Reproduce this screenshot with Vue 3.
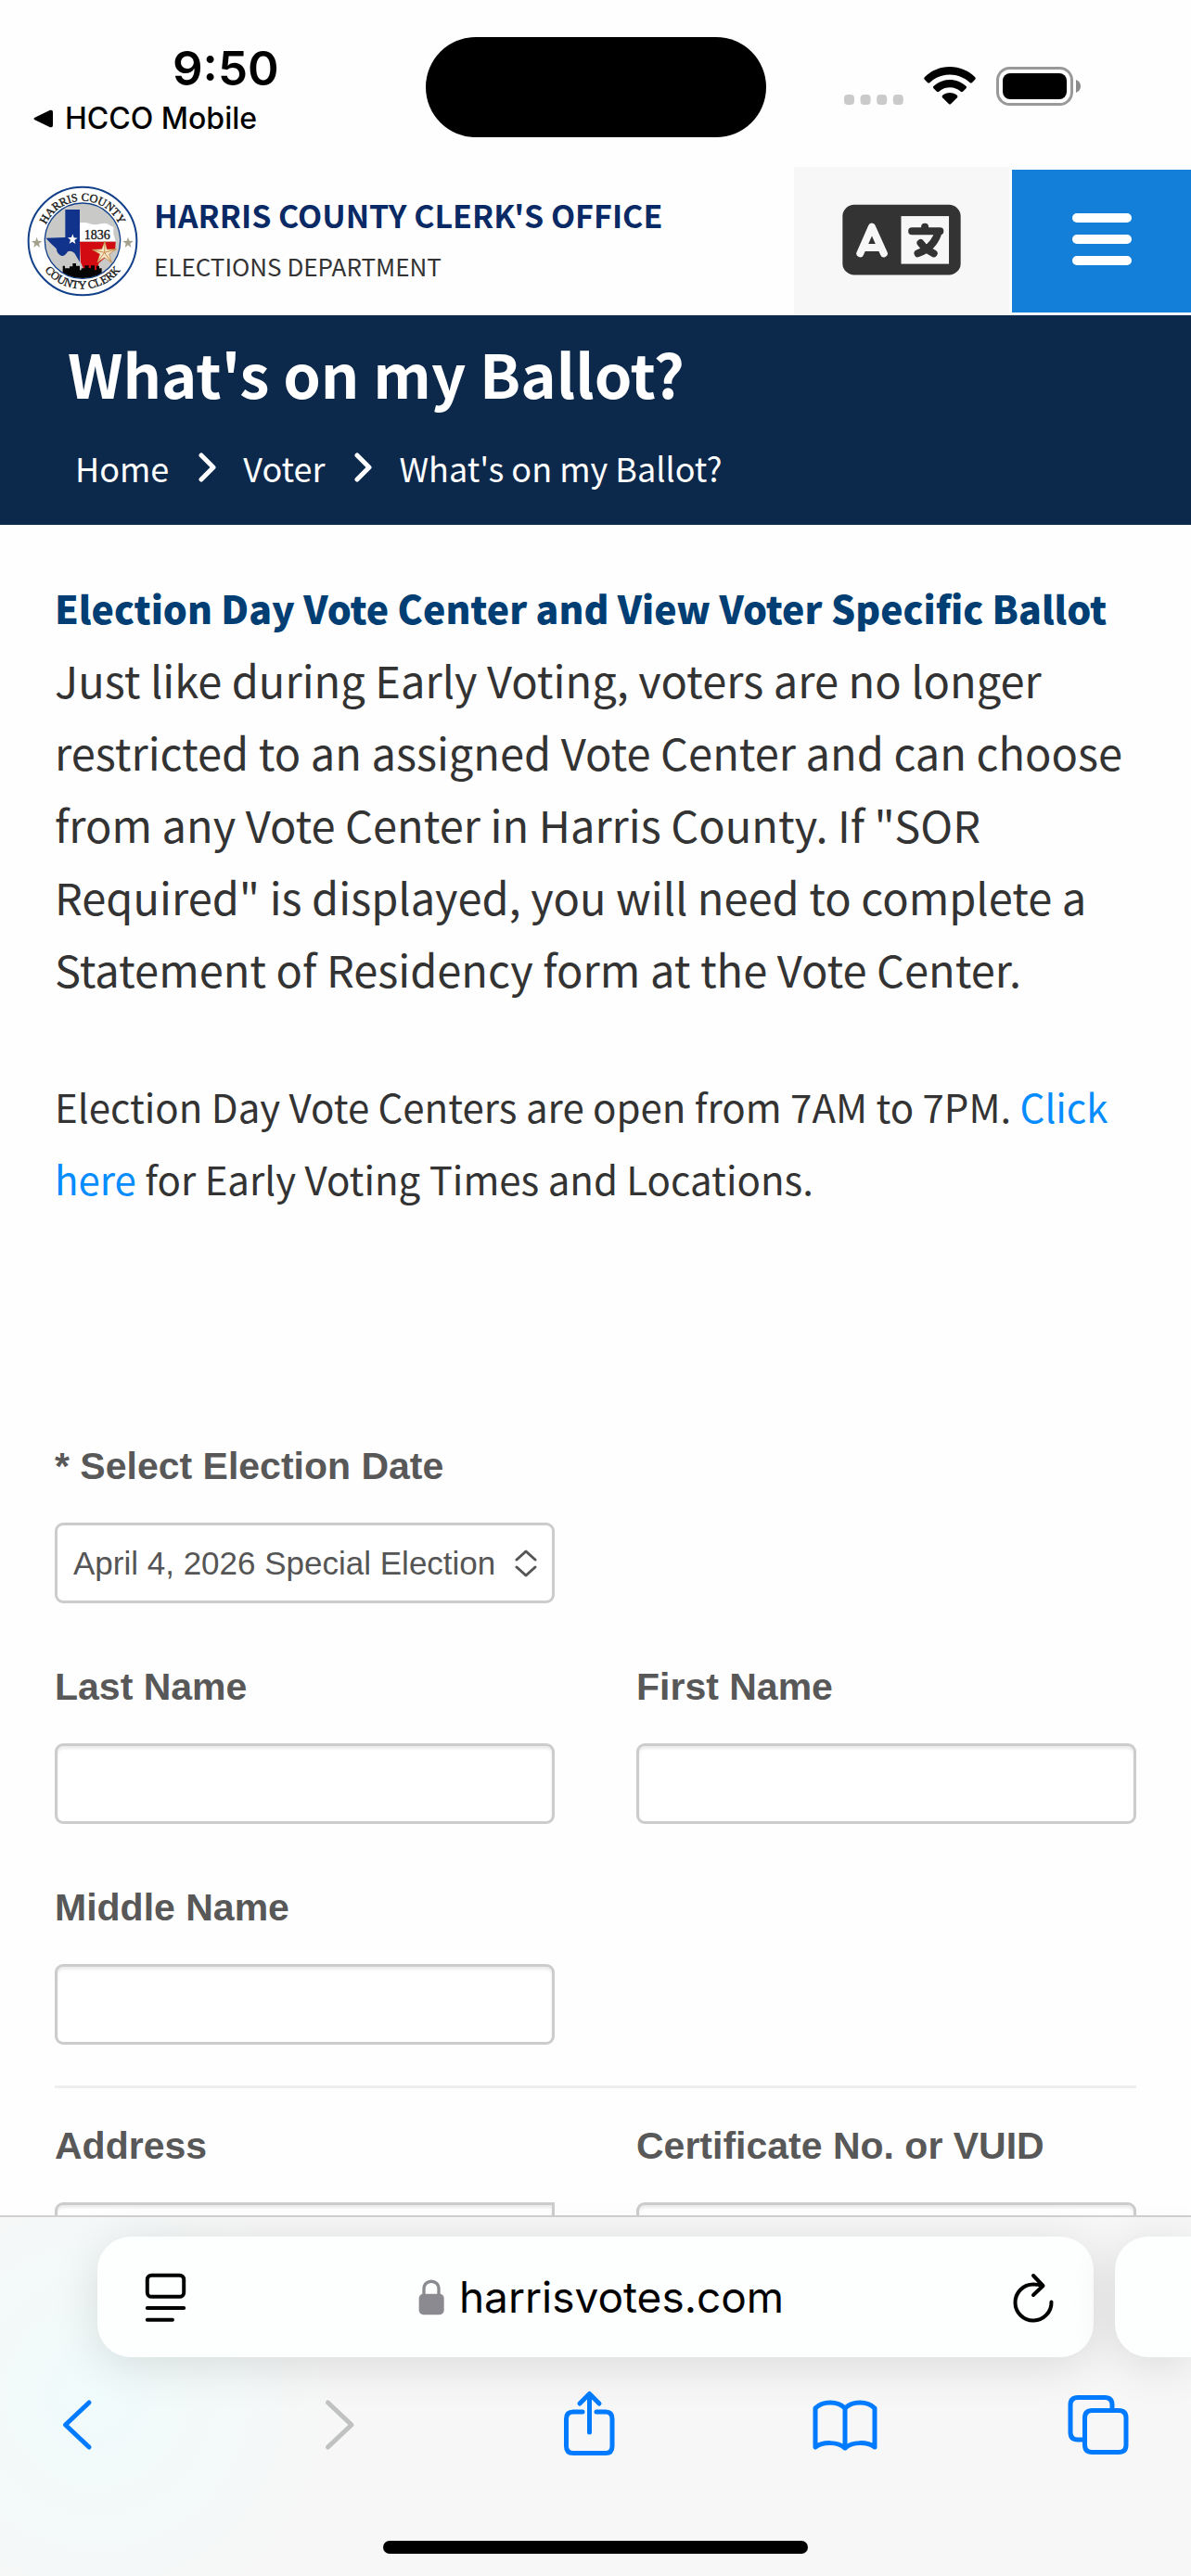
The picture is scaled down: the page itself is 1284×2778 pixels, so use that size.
<template>
  <div class="screen">
    <div class="status-bar">
      <div class="status-left">
        <span class="time">9:50</span>
        <a href="#" class="back-to-app">
          <svg width="22" height="20" viewBox="0 0 22 20" aria-hidden="true">
            <path d="M2 8.5 18 .8Q21 0 21 3V17Q21 20 18 19.2L2 11.5Q-1 10 2 8.5Z" />
          </svg>
          HCCO Mobile
        </a>
      </div>
      <div class="island"></div>
      <div class="status-right">
        <svg width="64" height="12" viewBox="0 0 64 12" fill="#cacaca" aria-hidden="true">
          <rect v-for="n in 4" :key="n" :x="(n - 1) * 17.6" width="11" height="11" rx="4" />
        </svg>
        <svg class="wifi" width="56" height="42" viewBox="0 0 56 42" aria-hidden="true">
          <path d="M28 0C38.500 0 48 4 55 11Q56.500 12.500 55 14L52 17Q50.800 18 49.500 17C43.500 11.500 36 8.500 28 8.500S12.500 11.500 6.500 17Q5.200 18 4 17L1 14Q-.5 12.500 1 11C8 4 17.500 0 28 0Z" />
          <path d="M28 14C34.500 14 40.500 16.500 45.300 20.800Q46.700 22 45.300 23.500L42 26.800Q41 27.700 39.800 26.800C36.500 24 32.500 22.300 28 22.300S19.500 24 16.200 26.800Q15 27.700 14 26.800L10.700 23.500Q9.300 22 10.700 20.800C15.500 16.500 21.500 14 28 14Z" />
          <path d="M28 28C31 28 33.500 29 35.800 30.800Q37 32 35.900 33.200L29.200 40Q28 41.200 26.800 40L20.100 33.200Q19 32 20.200 30.800C22.500 29 25 28 28 28Z" />
        </svg>
        <svg width="92" height="42" viewBox="0 0 92 42" aria-hidden="true">
          <rect x="1.500" y="1.500" width="80" height="39" rx="13" fill="none" stroke="#999" stroke-width="3" />
          <rect x="7" y="7" width="69" height="28" rx="8" />
          <path d="M86 14Q91 16 91 21T86 28Z" fill="#8c8c8c" />
        </svg>
      </div>
    </div>

    <header class="site-header">
      <a href="#" class="brand">
        <svg class="seal" width="120" height="120" viewBox="86 58 360 360" aria-hidden="true">
          <defs>
            <path id="seal-top" d="M136 238A130 130 0 0 1 396 238" />
            <path id="seal-bottom" d="M111 238A155 155 0 0 0 421 238" />
            <clipPath id="seal-clip"><circle cx="266" cy="237" r="121" /></clipPath>
          </defs>
          <circle cx="266" cy="238" r="175" fill="#fff" stroke="#12408a" stroke-width="6" />
          <circle cx="266" cy="237" r="122" fill="#c9cac8" stroke="#12408a" stroke-width="4" />
          <g clip-path="url(#seal-clip)">
            <path d="M257 179Q275 176 290 182T325 182T356 188L366 193V215L373 239H257Z" fill="#fff" />
            <path d="M210 136H257V306L240 277Q228 267 218 272Q210 287 198 286Q184 281 181 262L164 246L147 228L210 226Z" fill="#12338c" />
            <path d="M257 240H373L372 261L345 287L318 310L312 345H276L260 306Z" fill="#d20a11" />
            <path d="M150 342H202V318H209V326H224V320H234V310H245V318H257V332H262V326H273V317H286V325H293V317H305V332H311V318H320V326H328V342H376V370H150Z" fill="#050505" />
          </g>
          <path d="M234 215L238 227L250 228L240 235L243 247L233 240L223 246L227 234L218 227L230 226Z" fill="#fff" />
          <path d="M338 239L345 265L375 264L352 280L360 308L337 291L314 307L322 280L298 266L328 264Z" fill="#f7e6ca" stroke="#b77b35" stroke-width="2" />
          <path d="M338 239L337 275L375 264M337 275L360 308M337 275L314 307M337 275L298 266" stroke="#c68b48" stroke-width="3" fill="none" />
          <path
            v-for="x in [118, 413]"
            :key="x"
            :transform="`translate(${x} 242)`"
            d="M0-17L4-5L17-4L7 4L10 17L0 9L-10 17L-7 4L-17-4L-4-5Z"
            fill="#a5a08c"
          />
          <text x="271" y="233" class="seal-year">1836</text>
          <text class="seal-text">
            <textPath href="#seal-top" startOffset="50%" text-anchor="middle">HARRIS COUNTY</textPath>
          </text>
          <text class="seal-text">
            <textPath href="#seal-bottom" startOffset="50%" text-anchor="middle">COUNTY CLERK</textPath>
          </text>
        </svg>
        <span class="brand-text">
          <span class="brand-name">HARRIS COUNTY CLERK'S OFFICE</span>
          <span class="brand-dept">ELECTIONS DEPARTMENT</span>
        </span>
      </a>
      <button type="button" class="lang-btn" aria-label="Language">
        <svg width="128" height="77" viewBox="172 658 385 231" fill="none" stroke-linecap="round" stroke-linejoin="round" aria-hidden="true">
          <rect x="173" y="660" width="383" height="228" rx="38" fill="#333" />
          <rect x="363" y="697" width="155" height="155" fill="#f7f7f7" />
          <path d="M230 818L268 732L307 818M244 799H293" stroke="#f7f7f7" stroke-width="24" />
          <path d="M398 746H489M440 732V746M484 748C474 782 452 806 417 818M426 784Q440 804 469 818" stroke="#333" stroke-width="24" />
        </svg>
      </button>
      <button type="button" class="menu-btn" aria-label="Menu">
        <span></span>
        <span></span>
        <span></span>
      </button>
    </header>

    <main class="page">
      <section class="banner">
        <h1>What's on my Ballot?</h1>
        <nav class="crumbs">
          <template v-for="(crumb, i) in crumbs" :key="crumb">
            <svg v-if="i" width="24" height="32" viewBox="-4 0 24 32" aria-hidden="true">
              <path d="M3 3L16 16L3 29" fill="none" stroke="#fff" stroke-width="5" stroke-linecap="round" stroke-linejoin="round" />
            </svg>
            <a href="#">{{ crumb }}</a>
          </template>
        </nav>
      </section>

      <section class="content">
        <h2>Election Day Vote Center and View Voter Specific Ballot</h2>
        <p class="lead">
          Just like during Early Voting, voters are no longer restricted to an assigned Vote Center and can choose from any Vote Center in Harris County. If "SOR Required" is displayed, you will need to complete a Statement of Residency form at the Vote Center.
        </p>
        <p class="hours">
          Election Day Vote Centers are open from 7AM to 7PM. <a href="#">Click here</a> for Early Voting Times and Locations.
        </p>

        <form @submit.prevent>
          <div class="grid">
            <div class="field wide">
              <label for="election">* Select Election Date</label>
              <div class="select-wrap">
                <select id="election" v-model="form.election">
                  <option>April 4, 2026 Special Election</option>
                </select>
                <svg width="24" height="30" viewBox="0 0 24 30" aria-hidden="true">
                  <path d="M2 11L12 2L22 11M2 19L12 28L22 19" fill="none" stroke="#555" stroke-width="3" stroke-linecap="round" stroke-linejoin="round" />
                </svg>
              </div>
            </div>
            <div v-for="field in nameFields" :key="field.id" class="field">
              <label :for="field.id">{{ field.label }}</label>
              <input :id="field.id" v-model="form[field.id]" type="text">
            </div>
          </div>
          <hr>
          <div class="grid">
            <div class="field">
              <label for="address">Address</label>
              <input id="address" v-model="form.address" class="joined" type="text">
            </div>
            <div class="field">
              <label for="vuid">Certificate No. or VUID</label>
              <input id="vuid" v-model="form.vuid" type="text">
            </div>
          </div>
        </form>
      </section>
    </main>

    <footer class="toolbar">
      <div class="tabs">
        <div class="url-bar">
          <button type="button" class="reader" aria-label="Page menu">
            <svg width="45" height="53" viewBox="228 183 135 160" fill="none" stroke="#000" stroke-width="12" stroke-linecap="round" aria-hidden="true">
              <rect x="236" y="191" width="119" height="70" rx="14" />
              <path d="M236 298H355M236 336H318" />
            </svg>
          </button>
          <button type="button" class="address">
            <svg width="28" height="39" viewBox="1093 202 84 116" aria-hidden="true">
              <rect x="1095" y="249" width="81" height="67" rx="14" fill="#8b8a90" />
              <path d="M1111 252V233C1111 200 1159 200 1159 233V252" fill="none" stroke="#8b8a90" stroke-width="10" />
            </svg>
            harrisvotes.com
          </button>
          <button type="button" class="reload" aria-label="Reload">
            <svg width="52" height="60" viewBox="0 0 52 60" fill="none" stroke="#000" stroke-width="4" stroke-linecap="round" stroke-linejoin="round" aria-hidden="true">
              <path d="M45.500 35.500A19.500 19.500 0 1 1 26 16.500Q31 16.500 36 18M26 7L36.500 18L26 28" />
            </svg>
          </button>
        </div>
        <div class="next-tab"></div>
      </div>
      <nav class="actions">
        <button
          v-for="action in actions"
          :key="action.label"
          type="button"
          :aria-label="action.label"
          :disabled="action.disabled"
        >
          <svg width="80" height="80" viewBox="0 0 80 80" aria-hidden="true">
            <path :d="action.path" />
          </svg>
        </button>
      </nav>
      <div class="home-indicator"></div>
    </footer>
  </div>
</template>

<script setup>
import { reactive } from 'vue'

const crumbs = ['Home', 'Voter', "What's on my Ballot?"]

const nameFields = [
  { id: 'lastName', label: 'Last Name' },
  { id: 'firstName', label: 'First Name' },
  { id: 'middleName', label: 'Middle Name' }
]

const form = reactive({
  election: 'April 4, 2026 Special Election',
  lastName: '',
  firstName: '',
  middleName: '',
  address: '',
  vuid: ''
})

const actions = [
  { label: 'Back', path: 'M48 17L22.500 41L48 65' },
  { label: 'Forward', disabled: true, path: 'M31.500 17L57 41L31.500 65' },
  { label: 'Share', path: 'M32 27H22Q14.500 27 14.500 34.500V64Q14.500 71.500 22 71.500H57Q64 71.500 64 64V34.500Q64 27 57 27H47M39.500 49V8M29 18L39.500 7.500L50 18' },
  { label: 'Bookmarks', path: 'M9 65V23C17 15 33 15 41 23C49 15 65 15 73 23V65C65 59 49 59 41 66C33 59 17 59 9 65ZM41 23V66' },
  { label: 'Tabs', path: 'M25.500 57H18Q10 57 10 49V19.500Q10 11.500 18 11.500H47Q55 11.500 55 19.500V25.500M33.500 25.500H62Q70 25.500 70 33.500V62.500Q70 70.500 62 70.500H33.500Q25.500 70.500 25.500 62.500V33.500Q25.500 25.500 33.500 25.500Z' }
]
</script>

<style>
body{
    margin: 0;
    background: #fff;
}
</style>

<style scoped>
*{
    box-sizing: border-box;
}
.screen{
    display: flex;
    flex-direction: column;
    height: 100vh;
    overflow: hidden;
    color: #333;
    background: #fefefe;
    font-family: "Noto Sans CJK SC", "Open Sans", sans-serif;
}
h1, h2, p{
    margin: 0;
}
a{
    text-decoration: none;
    color: inherit;
}
button{
    border: 0;
    padding: 0;
    background: none;
    color: inherit;
    font: inherit;
}
svg{
    display: block;
    flex: none;
}

/* phone status bar */
.status-bar{
    display: grid;
    grid-template-columns: 1fr auto 1fr;
    align-items: start;
    padding: 40px 118px 32px 36px;
    color: #000;
    font-family: Inter, "Liberation Sans", sans-serif;
}
.status-left{
    display: flex;
    flex-direction: column;
    gap: 7px;
    padding-top: 6px;
}
.time{
    padding-left: 150px;
    font-size: 51px;
    line-height: 56px;
    font-weight: 600;
}
.back-to-app{
    display: flex;
    align-items: center;
    gap: 12px;
    font-size: 32px;
    line-height: 38px;
    font-weight: 500;
}
.island{
    width: 367px;
    height: 108px;
    border-radius: 54px;
    background: #000;
    margin-left: 82px;
}
.status-right{
    display: flex;
    justify-content: flex-end;
    align-items: flex-end;
    gap: 22px;
    padding-top: 32px;
}

/* site header */
.site-header{
    display: flex;
    align-items: stretch;
    height: 160px;
    border-bottom: 1px solid #eee;
}
.brand{
    display: flex;
    flex: 1;
    align-items: center;
    gap: 17px;
    padding-left: 29px;
}
.seal-text, .seal-year{
    font-family: "Liberation Serif", serif;
    font-size: 37px;
    fill: #111;
    stroke: #111;
    stroke-width: 1px;
}
.seal-year{
    font-size: 42px;
}
.brand-text{
    display: flex;
    flex-direction: column;
    gap: 13px;
    padding-bottom: 6px;
}
.brand-name{
    color: #0a2a66;
    font-size: 34px;
    line-height: 48px;
    font-weight: 700;
}
.brand-dept{
    font-size: 26px;
    line-height: 36px;
}
.lang-btn{
    display: flex;
    align-items: center;
    justify-content: center;
    width: 232px;
    padding-bottom: 2px;
    background: #f7f7f7;
}
.menu-btn{
    display: flex;
    flex-direction: column;
    align-items: center;
    justify-content: center;
    gap: 13px;
    width: 193px;
    margin: 3px 0 2px 3px;
    padding-bottom: 5px;
    background: #137fd9;
}
.menu-btn span{
    width: 64px;
    height: 10px;
    border-radius: 5px;
    background: #fff;
}

/* page */
.page{
    flex: 1;
    min-height: 0;
    overflow: hidden;
}
.banner{
    padding: 22px 73px 34px;
    color: #fff;
    background: #0c284b;
}
h1{
    font-size: 65px;
    line-height: 80px;
    font-weight: 700;
}
.crumbs{
    display: flex;
    align-items: center;
    gap: 28px;
    margin-top: 34px;
    padding-left: 8px;
    font-size: 36px;
    line-height: 56px;
}
.content{
    padding: 50px 59px 0;
}
h2{
    color: #003e73;
    font-size: 41px;
    line-height: 78px;
    font-weight: 900;
}
.lead{
    font-size: 47px;
    line-height: 78px;
}
.hours{
    margin-top: 70px;
    font-size: 42px;
    line-height: 78px;
}
.hours a{
    color: #058cff;
}
form{
    margin-top: 241px;
    color: #585858;
    font-family: "Liberation Sans", Arial, sans-serif;
}
.grid{
    display: grid;
    grid-template-columns: 1fr 1fr;
    gap: 60px 88px;
}
.wide{
    grid-column: 1 / -1;
}
.wide .select-wrap{
    width: calc(50% - 44px);
}
.field{
    display: flex;
    flex-direction: column;
    gap: 31px;
}
label{
    font-size: 41px;
    line-height: 60px;
    font-weight: 700;
}
input, select{
    display: block;
    width: 100%;
    height: 87px;
    border: 3px solid #ccc;
    border-radius: 9px;
    padding: 0 17px;
    color: #555;
    background: #fff;
    font: inherit;
    font-size: 35px;
    outline: none;
}
input{
    box-shadow: inset 0 3px 3px rgba(0, 0, 0, 0.08);
}
.joined{
    border-radius: 9px 0 0 9px;
}
.select-wrap{
    position: relative;
}
select{
    appearance: none;
}
.select-wrap svg{
    position: absolute;
    right: 19px;
    top: 29px;
    pointer-events: none;
}
hr{
    height: 3px;
    margin: 44px 0 32px;
    border: 0;
    background: #eee;
}

/* browser toolbar */
.toolbar{
    padding: 21px 0 24px;
    border-top: 2px solid #d0d0d0;
    background:
        radial-gradient(circle at 8% 50%, #f0fbfb 0, rgba(240, 251, 251, 0) 260px),
        #f7f7f7;
    color: #000;
    font-family: Inter, "Liberation Sans", sans-serif;
}
.tabs{
    display: flex;
    gap: 23px;
    padding-left: 105px;
}
.url-bar, .next-tab{
    height: 130px;
    border-radius: 36px;
    background: #fdfefe;
    box-shadow: 0 8px 50px rgba(0, 0, 0, 0.12);
}
.url-bar{
    display: grid;
    grid-template-columns: 1fr auto 1fr;
    align-items: center;
    flex: 1;
    padding: 0 39px 0 51px;
}
.next-tab{
    width: 82px;
    border-radius: 36px 0 0 36px;
}
.address{
    display: flex;
    align-items: center;
    gap: 16px;
    font-size: 46px;
    line-height: 60px;
}
.reload{
    justify-self: end;
}
.reader{
    justify-self: start;
}
.actions{
    display: flex;
    justify-content: space-between;
    padding: 32px 60px 86px 48px;
}
.actions path{
    fill: none;
    stroke: #007aff;
    stroke-width: 5px;
    stroke-linecap: round;
    stroke-linejoin: round;
}
.actions button:disabled path{
    stroke: #c0c1c1;
}
.home-indicator{
    width: 458px;
    height: 14px;
    margin: 0 auto;
    border-radius: 7px;
    background: #000;
}
</style>
